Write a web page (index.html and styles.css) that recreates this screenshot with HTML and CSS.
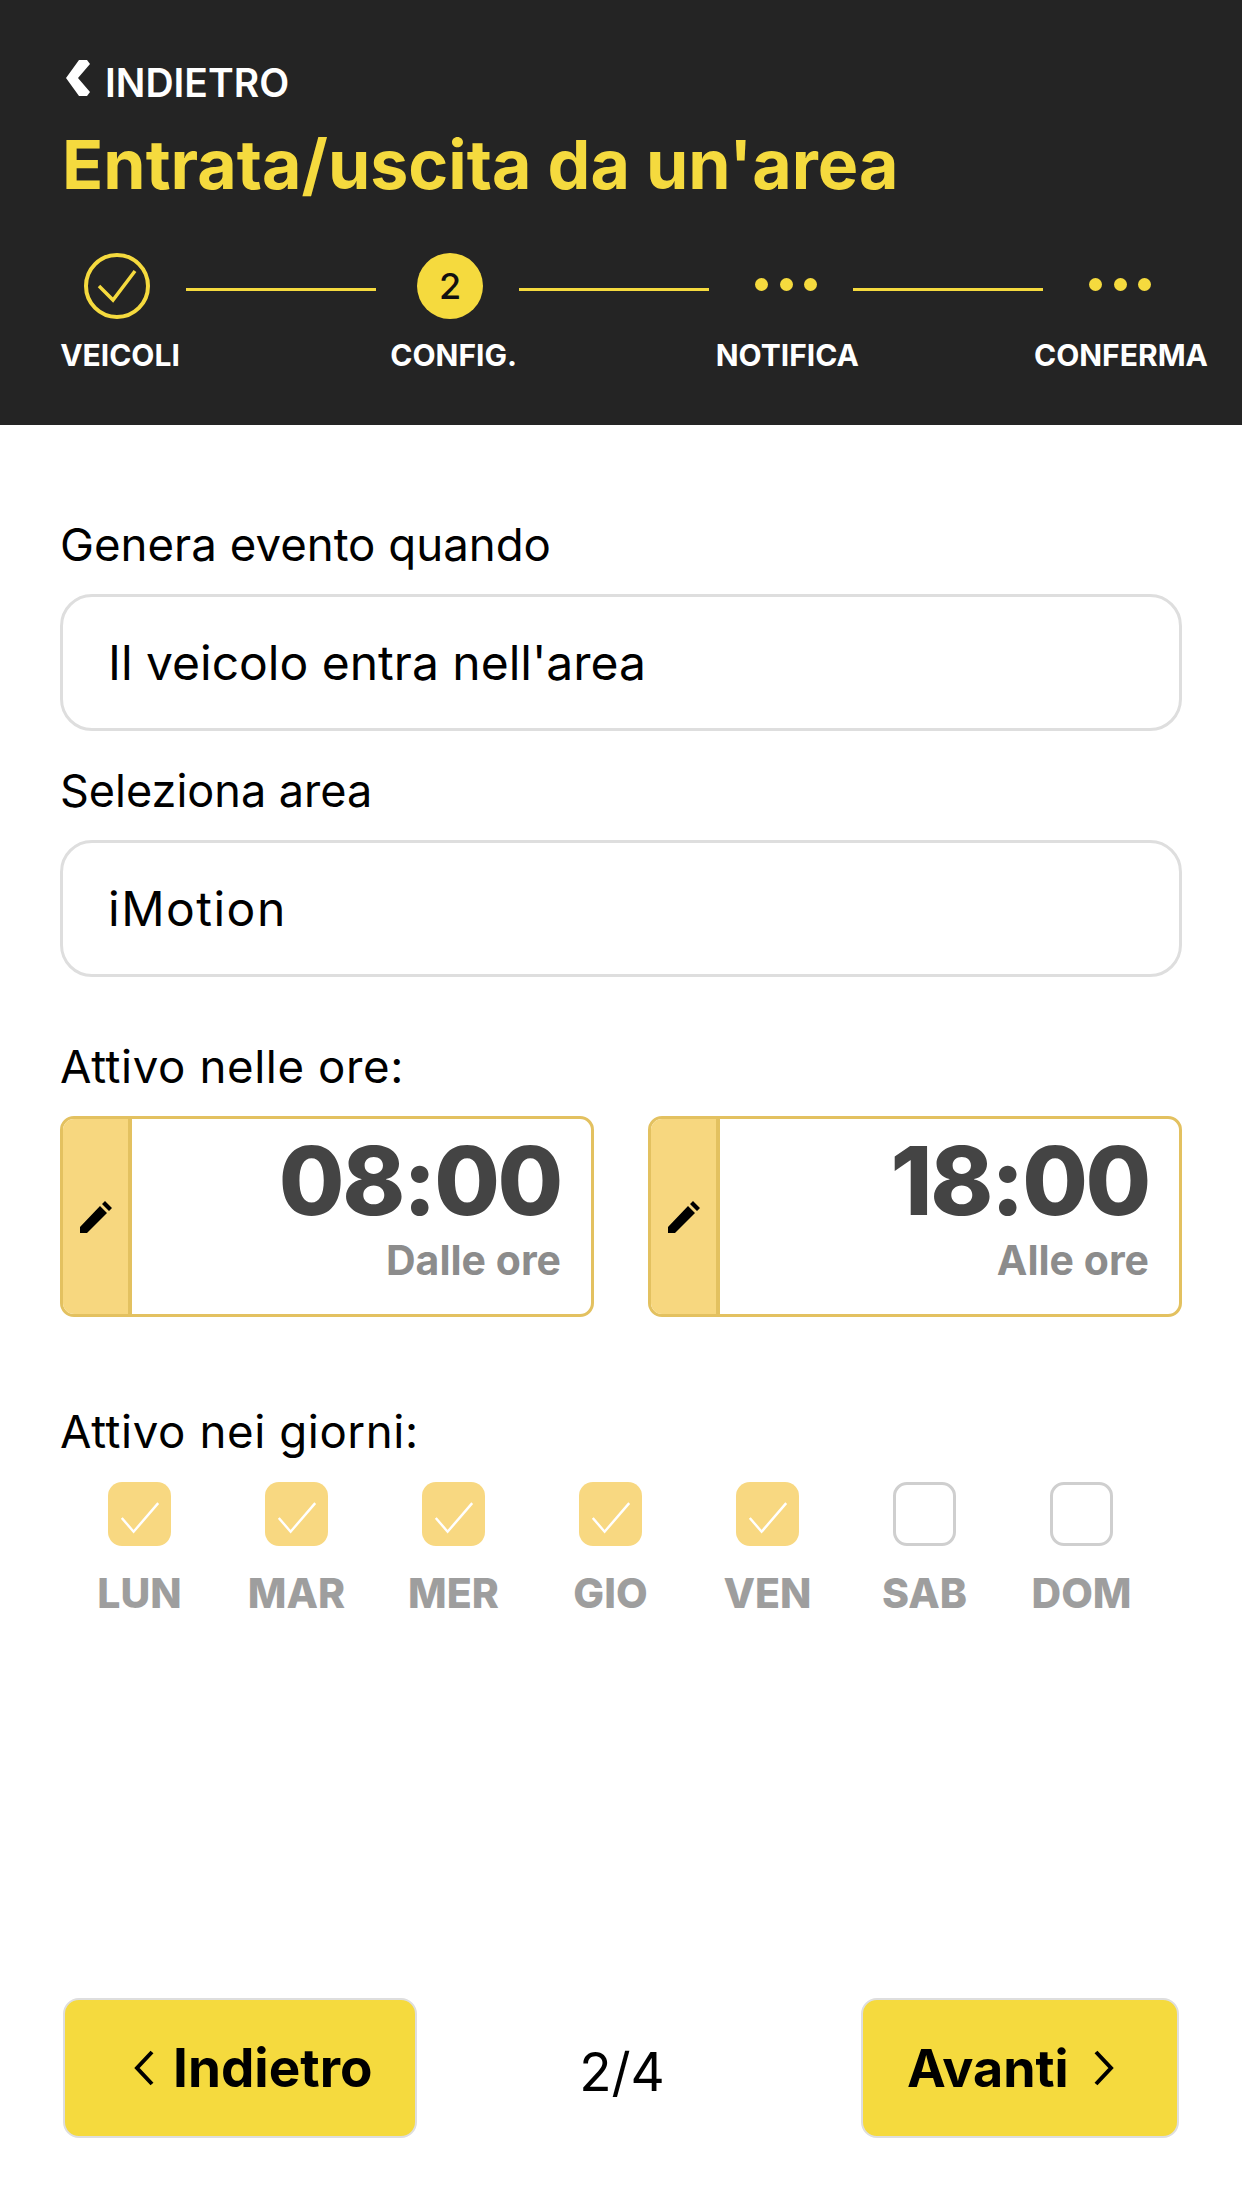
FILE: index.html
```html
<!DOCTYPE html>
<html lang="it">
<head>
<meta charset="utf-8">
<title>Entrata/uscita da un'area</title>
<link rel="stylesheet" href="styles.css">
</head>
<body>
<div class="page">
  <header class="header">
    <div class="back">
      <svg class="back-icon" viewBox="0 0 26 36"><path d="M14 0h8l3 4L13 18l12 14-3 4h-8L1 18z" fill="#fff"/></svg>
      <span>INDIETRO</span>
    </div>
    <h1 class="title">Entrata/uscita da un'area</h1>
    <div class="steps">
      <svg class="step-circle" viewBox="0 0 66 66"><circle cx="33" cy="33" r="31" fill="none" stroke="#f5da3e" stroke-width="4"/><path d="M15 33l14 14L51 18" fill="none" stroke="#f5da3e" stroke-width="3.5"/></svg>
      <div class="step-line"></div>
      <div class="step-current">2</div>
      <div class="step-line"></div>
      <div class="step-dots"><i></i><i></i><i></i></div>
      <div class="step-line"></div>
      <div class="step-dots"><i></i><i></i><i></i></div>
    </div>
    <div class="step-labels">
      <span>VEICOLI</span><span>CONFIG.</span><span>NOTIFICA</span><span>CONFERMA</span>
    </div>
  </header>
  <main class="form">
    <label class="label label-first">Genera evento quando</label>
    <div class="field">Il veicolo entra nell'area</div>
    <label class="label label-second">Seleziona area</label>
    <div class="field field-short">iMotion</div>
    <label class="label label-hours">Attivo nelle ore:</label>
    <div class="times">
      <div class="time-card">
        <div class="time-edit"><svg class="pencil" viewBox="0 0 32 32"><path d="M0 32v-6L20 5l7 7L7 32zM22 3l3-3 7 7-3 3z" fill="#000"/></svg></div>
        <div class="time-body"><div class="time-value">08:00</div><div class="time-caption">Dalle ore</div></div>
      </div>
      <div class="time-card">
        <div class="time-edit"><svg class="pencil" viewBox="0 0 32 32"><path d="M0 32v-6L20 5l7 7L7 32zM22 3l3-3 7 7-3 3z" fill="#000"/></svg></div>
        <div class="time-body"><div class="time-value">18:00</div><div class="time-caption">Alle ore</div></div>
      </div>
    </div>
    <label class="label label-days">Attivo nei giorni:</label>
    <div class="days">
      <div class="day"><div class="box on"><svg viewBox="0 0 64 64"><path d="M14 36l12 14L51 21" fill="none" stroke="#fff" stroke-width="2.5"/></svg></div><span>LUN</span></div>
      <div class="day"><div class="box on"><svg viewBox="0 0 64 64"><path d="M14 36l12 14L51 21" fill="none" stroke="#fff" stroke-width="2.5"/></svg></div><span>MAR</span></div>
      <div class="day"><div class="box on"><svg viewBox="0 0 64 64"><path d="M14 36l12 14L51 21" fill="none" stroke="#fff" stroke-width="2.5"/></svg></div><span>MER</span></div>
      <div class="day"><div class="box on"><svg viewBox="0 0 64 64"><path d="M14 36l12 14L51 21" fill="none" stroke="#fff" stroke-width="2.5"/></svg></div><span>GIO</span></div>
      <div class="day"><div class="box on"><svg viewBox="0 0 64 64"><path d="M14 36l12 14L51 21" fill="none" stroke="#fff" stroke-width="2.5"/></svg></div><span>VEN</span></div>
      <div class="day"><div class="box"></div><span>SAB</span></div>
      <div class="day"><div class="box"></div><span>DOM</span></div>
    </div>
  </main>
  <footer class="footer">
    <div class="btn btn-prev"><svg class="chev" viewBox="0 0 22 36"><path d="M19 2L4 18l15 16" fill="none" stroke="#000" stroke-width="4"/></svg><span>Indietro</span></div>
    <div class="pager">2/4</div>
    <div class="btn btn-next"><span>Avanti</span><svg class="chev" viewBox="0 0 22 36"><path d="M3 2l15 16L3 34" fill="none" stroke="#000" stroke-width="4"/></svg></div>
  </footer>
</div>
</body>
</html>
```
FILE: styles.css
```css
* { box-sizing: border-box; }
html, body { margin: 0; padding: 0; background: #fff; }
body { font-family: Inter, "Noto Sans", sans-serif; color: #000; }
.page { width: 1242px; height: 2208px; display: flex; flex-direction: column; overflow: hidden; }

.header { background: #242424; height: 425px; padding-top: 58px; flex: none; }
.back { display: flex; align-items: center; gap: 14px; padding-left: 65px; height: 48px; color: #fff; font-size: 39px; font-weight: 600; }
.back-icon { width: 26px; height: 36px; margin-top: -8px; }
.title { margin: 16px 0 0 62px; font-size: 68px; line-height: 84px; font-weight: 700; color: #f5da3e; }
.steps { display: flex; align-items: center; margin-top: 47px; padding-left: 84px; height: 66px; }
.step-circle { width: 66px; height: 66px; flex: none; }
.step-line { width: 190px; height: 3px; background: #f5da3e; margin: 6px 41px 0 36px; flex: none; }
.step-current { width: 66px; height: 66px; flex: none; border-radius: 50%; background: #f5da3e; color: #111; font-size: 36px; font-weight: 500; display: flex; align-items: center; justify-content: center; }
.step-dots { width: 62px; flex: none; display: flex; justify-content: space-between; margin: -4px 0 0 5px; }
.step-dots i { width: 13px; height: 13px; border-radius: 50%; background: #f5da3e; }
.step-labels { display: flex; justify-content: space-between; padding: 0 31px 0 30px; margin-top: 18px; }
.step-labels span { width: 180px; text-align: center; color: #fff; font-size: 30px; line-height: 36px; font-weight: 700; white-space: nowrap; }

.form { flex: 1; padding: 0 60px; display: flex; flex-direction: column; }
.label { display: block; font-size: 45.6px; line-height: 50px; }
.label-first { margin-top: 95px; margin-bottom: 24px; }
.label-second { margin-top: 35px; margin-bottom: 24px; font-size: 45px; }
.label-hours { margin-top: 65px; margin-bottom: 24px; letter-spacing: 0.6px; }
.label-days { margin-top: 90px; margin-bottom: 25px; letter-spacing: 0.6px; }
.field { height: 137px; border: 3px solid #dedede; border-radius: 32px; padding-left: 45px; display: flex; align-items: center; font-size: 48px; }
.field-short { letter-spacing: 1.5px; }
.times { display: flex; justify-content: space-between; }
.time-card { width: 534px; height: 201px; border: 3px solid #e3c160; border-radius: 14px; display: flex; overflow: hidden; }
.time-edit { width: 69px; flex: none; background: #f7d77f; border-right: 4px solid #e3c160; display: flex; align-items: center; justify-content: center; }
.pencil { width: 32px; height: 32px; }
.time-body { flex: 1; padding: 10px 30px 0 0; text-align: right; }
.time-value { font-size: 95px; line-height: 104px; font-weight: 800; color: #444; letter-spacing: -2.3px; }
.time-caption { font-size: 41px; line-height: 50px; font-weight: 700; color: #8c8c8c; margin-top: 2px; }
.days { display: grid; grid-template-columns: repeat(7, 157px); margin-left: 1px; }
.day { display: flex; flex-direction: column; align-items: center; }
.box { width: 63px; height: 64px; border-radius: 14px; border: 3px solid #cfcfcf; }
.box.on { background: #f8d881; border: 0; }
.box svg { display: block; width: 63px; height: 64px; }
.day span { margin-top: 22px; font-size: 41px; line-height: 50px; font-weight: 800; color: #9e9e9e; }

.footer { flex: none; height: 140px; margin: 0 63px 70px 63px; display: flex; justify-content: space-between; align-items: center; }
.btn { height: 140px; background: #f5da3e; border: 2px solid #dedede; border-radius: 16px; display: flex; align-items: center; font-size: 52px; font-weight: 700; }
.btn-prev { width: 354px; padding-left: 68px; gap: 18px; font-size: 53px; }
.btn-next { width: 318px; padding-left: 44px; gap: 24px; }
.chev { width: 22px; height: 36px; }
.pager { font-size: 53px; margin-top: 8px; margin-right: 34px; }
```
